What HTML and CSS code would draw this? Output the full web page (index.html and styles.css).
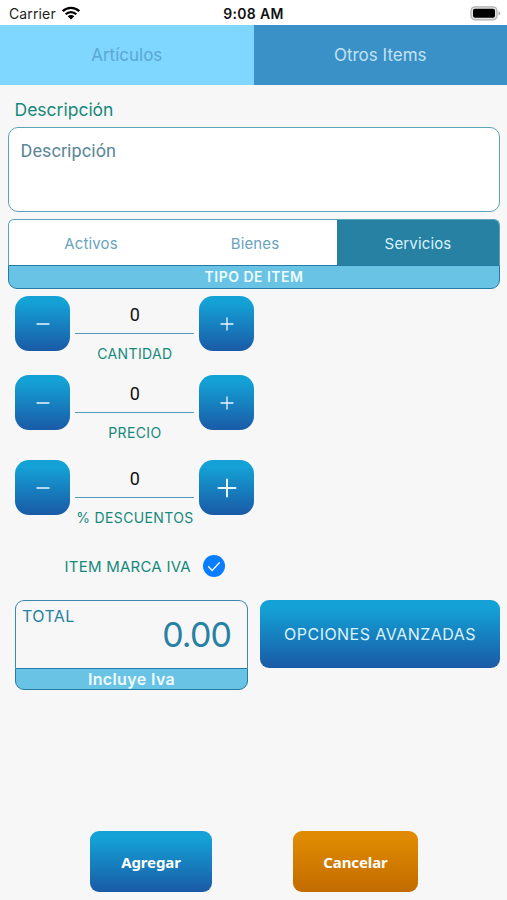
FILE: index.html
```html
<!DOCTYPE html>
<html lang="es">
<head>
<meta charset="utf-8">
<title>Otros Items</title>
<link rel="stylesheet" href="styles.css">
</head>
<body>
<header class="status">
  <div class="carrier"><span class="carrier-name">Carrier</span>
    <svg class="wifi" width="18" height="14" viewBox="0 0 18 14"><g fill="none" stroke="#000" stroke-width="2.3"><path d="M.8 5.2a11.6 11.6 0 0 1 16.4 0"/><path d="M3.7 8.3a7.5 7.5 0 0 1 10.600 0"/></g><path d="M9 13.600 5.700 10.300a4.700 4.700 0 0 1 6.600 0z"/></svg>
  </div>
  <span class="clock">9:08 AM</span>
  <svg class="battery" width="31" height="15" viewBox="0 0 31 15"><rect x="1" y=".8" width="26" height="13" rx="4" fill="#e4e4e4" stroke="#b0b0b0" stroke-width="1.2"/><rect x="3" y="2.8" width="22" height="9" rx="2"/><path d="M28.500 5v4.600q1.700-.7 1.700-2.300T28.500 5z" fill="#aaa"/></svg>
</header>
<nav class="tabs">
  <div class="tab tab-light"><span>Artículos</span></div>
  <div class="tab tab-active"><span>Otros Items</span></div>
</nav>
<main class="form">
  <label class="field-label"><span>Descripción</span></label>
  <div class="textarea"><span>Descripción</span></div>
  <section class="types">
    <div class="segments">
      <div class="segment"><span>Activos</span></div>
      <div class="segment"><span>Bienes</span></div>
      <div class="segment selected"><span>Servicios</span></div>
    </div>
    <div class="strip"><span class="strip-type">TIPO DE ITEM</span></div>
  </section>
  <section class="steppers">
    <div class="stepper">
      <div class="step"><svg width="14" height="14" viewBox="0 0 14 14"><path d="M1 7h12"/></svg></div>
      <div class="amount"><div class="value">0</div><div class="caption">CANTIDAD</div></div>
      <div class="step"><svg width="14" height="14" viewBox="0 0 14 14"><path d="M1 7h12M7 1v12"/></svg></div>
    </div>
    <div class="stepper">
      <div class="step"><svg width="14" height="14" viewBox="0 0 14 14"><path d="M1 7h12"/></svg></div>
      <div class="amount"><div class="value">0</div><div class="caption">PRECIO</div></div>
      <div class="step"><svg width="14" height="14" viewBox="0 0 14 14"><path d="M1 7h12M7 1v12"/></svg></div>
    </div>
    <div class="stepper last">
      <div class="step"><svg width="14" height="14" viewBox="0 0 14 14"><path d="M1 7h12"/></svg></div>
      <div class="amount"><div class="value">0</div><div class="caption">% DESCUENTOS</div></div>
      <div class="step"><svg class="large" width="20" height="20" viewBox="0 0 20 20"><path d="M1.500 10h17M10 1.500v17"/></svg></div>
    </div>
  </section>
  <div class="iva"><span class="iva-text">ITEM MARCA IVA</span>
    <svg width="24" height="24" viewBox="0 0 24 24"><circle cx="12" cy="12" r="11" fill="#087dff"/><path d="m6.600 12.700 3.700 3.700 7-7.700" fill="none" stroke="#fff" stroke-width="1.400" stroke-linecap="round" stroke-linejoin="round"/></svg>
  </div>
  <section class="summary">
    <div class="total">
      <div class="total-body"><span class="total-label">TOTAL</span><span class="total-value">0.00</span></div>
      <div class="strip total-strip"><span class="strip-iva">Incluye Iva</span></div>
    </div>
    <div class="options"><span>OPCIONES AVANZADAS</span></div>
  </section>
</main>
<footer class="actions">
  <div class="action add"><span>Agregar</span></div>
  <div class="action cancel"><span>Cancelar</span></div>
</footer>
</body>
</html>
```
FILE: styles.css
```css
* { box-sizing: border-box; }
body {
  margin: 0;
  height: 900px;
  overflow: hidden;
  display: flex;
  flex-direction: column;
  background: #f7f7f7;
  font-family: Inter, "Liberation Sans", sans-serif;
  white-space: nowrap;
}
.status {
  height: 25px;
  flex: none;
  display: grid;
  grid-template-columns: 1fr auto 1fr;
  align-items: center;
  padding: 1px 6px 0 9px;
  background: #fff;
  color: #111;
  font-size: 14px;
}
.carrier { display: flex; align-items: center; gap: 6px; }
.carrier-name { color: #222; letter-spacing: .13px; padding-top: 1px; }
.clock { font-weight: 600; letter-spacing: .35px; margin-left: -3px; padding-top: 1px; }
.battery { justify-self: end; }
.tabs { display: flex; height: 60px; flex: none; font-size: 17px; }
.tab { flex: 1; display: flex; align-items: center; justify-content: center; }
.tab-light { background: #7fd6ff; color: #5aa9d1; }
.tab-active { background: #3991c8; color: #c5e1f2; }
.form { padding: 0 7px 0 8px; }
.field-label {
  display: block;
  height: 42px;
  padding: 3px 0 0 6.500px;
  line-height: 44px;
  font-size: 17.500px;
  color: #16897b;
}
.textarea {
  height: 85px;
  padding: 12px 11.500px;
  border: 1.500px solid #5ba3b8;
  border-radius: 10px;
  background: #fff;
  font: 18px/22px Roboto, sans-serif;
  letter-spacing: .08px;
  color: #5c8797;
}
.types { margin-top: 7px; height: 70px; display: flex; flex-direction: column; }
.segments {
  height: 46px;
  display: flex;
  border: 1px solid #5ba3b8;
  border-bottom: 0;
  border-radius: 6px 6px 0 0;
  overflow: hidden;
  background: #fff;
  color: #68a3c0;
  font-size: 15px;
}
.segment { flex: 1; display: flex; align-items: center; justify-content: center; padding-top: 2px; letter-spacing: .15px; }
.selected { flex: 0 0 162px; background: #2681a3; color: #d9f3ff; }
.strip {
  height: 24px;
  display: flex;
  align-items: center;
  justify-content: center;
  border: 1.500px solid #247ba5;
  border-radius: 0 0 9px 9px;
  background: #68c3e5;
  color: #effbff;
  font-size: 14px;
  font-weight: 600;
}
.strip-type { letter-spacing: .48px; margin-top: -1px; }
.strip-iva { letter-spacing: .37px; }
.steppers { padding: 7px 0 0 7.400px; }
.stepper { display: flex; gap: 5px; height: 79px; }
.last { margin-top: 6px; }
.step {
  width: 55px;
  height: 55px;
  border-radius: 14px;
  display: flex;
  align-items: center;
  justify-content: center;
  background: linear-gradient(#14a1d5 12%, #1a5aa6);
}
.step svg { fill: none; stroke: #e8f7ff; stroke-width: 1.300; stroke-linecap: round; }
.step .large { stroke-width: 2; }
.amount { width: 119px; text-align: center; }
.value {
  height: 38px;
  border-bottom: 1.500px solid #529bb9;
  font: 18px/38px Roboto, sans-serif;
  color: #111;
}
.caption { line-height: 40px; font-size: 14px; letter-spacing: .36px; color: #16897b; }
.iva {
  height: 24px;
  display: flex;
  align-items: center;
  gap: 11px;
  margin-top: 15px;
  padding-left: 56.500px;
  color: #16897b;
  font-size: 15px;
}
.iva-text { letter-spacing: .24px; }
.summary { display: flex; gap: 12px; padding: 22px 0 0 7px; }
.total { width: 233px; height: 90px; }
.total-body {
  height: 68px;
  display: flex;
  justify-content: space-between;
  padding: 3px 16px 0 6px;
  border: 1.500px solid #3c89ad;
  border-bottom: 0;
  border-radius: 9px 9px 0 0;
  color: #2681a3;
}
.total-label { font-size: 16px; line-height: 24px; letter-spacing: .4px; }
.total-value { font-size: 34px; line-height: 61px; letter-spacing: -.9px; }
.total-strip { height: 22px; font-size: 16px; }
.options {
  flex: 1;
  height: 68px;
  border-radius: 9px;
  display: flex;
  align-items: center;
  justify-content: center;
  background: linear-gradient(#14a1d5 12%, #1a5aa6);
  color: #dbf3ff;
  font-size: 16px;
  letter-spacing: .46px;
}
.actions { margin-top: auto; padding: 0 89px 8px 90px; display: flex; justify-content: space-between; }
.action {
  height: 61px;
  border-radius: 9px;
  display: flex;
  align-items: center;
  justify-content: center;
  padding-top: 1px;
  color: #fff;
  font: 700 15px "Noto Sans", sans-serif;
  letter-spacing: -.1px;
}
.add { width: 122px; background: linear-gradient(#14a1d5 12%, #1a5aa6); }
.cancel { width: 125px; background: linear-gradient(#df8a02 12%, #c26b00); }
```
